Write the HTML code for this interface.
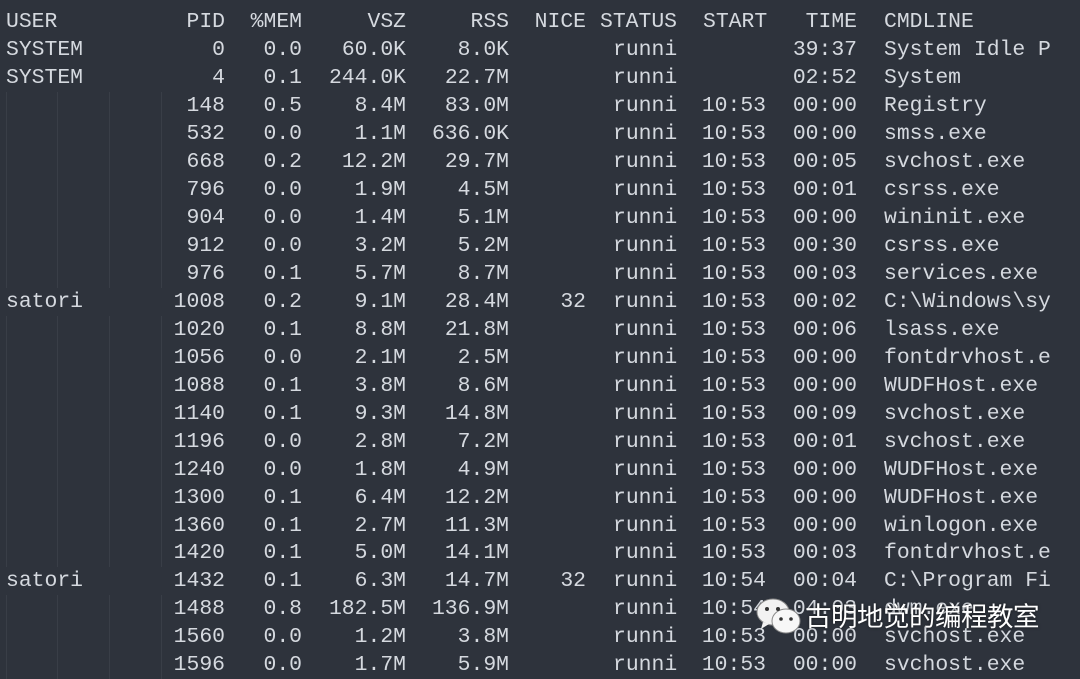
<!DOCTYPE html>
<html><head><meta charset="utf-8"><style>
html,body{margin:0;padding:0}
body{width:1080px;height:665px;overflow:hidden;background:#2e333c;position:relative;font-family:"Liberation Mono",monospace;font-size:21.4px;color:#d5d9df}
.r{position:absolute;left:0;width:1080px;height:28px;line-height:28px;white-space:pre;margin-top:1px}
.r span{position:absolute;top:0}
.u{left:6px}
.p{left:140px;width:85px;text-align:right}
.m{left:230px;width:72px;text-align:right}
.v{left:306px;width:100px;text-align:right}
.s{left:410px;width:99px;text-align:right}
.n{left:520px;width:66px;text-align:right}
.st{left:613px}
.a{left:680px;width:86px;text-align:right}
.t{left:770px;width:87px;text-align:right}
.c{left:884px}
.g{position:absolute;left:0;top:0;height:28px;width:170px;background:
linear-gradient(#393e47,#393e47) 6px 0/1px 28px no-repeat,
linear-gradient(#393e47,#393e47) 57px 0/1px 28px no-repeat,
linear-gradient(#393e47,#393e47) 109px 0/1px 28px no-repeat,
linear-gradient(#393e47,#393e47) 161px 0/1px 28px no-repeat}
.wm{position:absolute;left:805px;top:597px;font-family:"Noto Sans CJK SC",sans-serif;font-size:26.5px;color:#fff;text-shadow:0 0 3px rgba(0,0,0,.6);letter-spacing:-0.5px;line-height:36px}
</style></head><body>
<div class="r" style="top:7px"><span class="u">USER</span><span class="p">PID</span><span class="m">%MEM</span><span class="v">VSZ</span><span class="s">RSS</span><span class="n">NICE</span><span style="left:600px">STATUS</span><span style="left:703px">START</span><span class="t">TIME</span><span class="c">CMDLINE</span></div>
<div class="r" style="top:35px"><span class="u">SYSTEM</span><span class="p">0</span><span class="m">0.0</span><span class="v">60.0K</span><span class="s">8.0K</span><span class="st">runni</span><span class="t">39:37</span><span class="c">System Idle P</span></div>
<div class="r" style="top:63px"><span class="u">SYSTEM</span><span class="p">4</span><span class="m">0.1</span><span class="v">244.0K</span><span class="s">22.7M</span><span class="st">runni</span><span class="t">02:52</span><span class="c">System</span></div>
<div class="r" style="top:91px"><div class="g"></div><span class="p">148</span><span class="m">0.5</span><span class="v">8.4M</span><span class="s">83.0M</span><span class="st">runni</span><span class="a">10:53</span><span class="t">00:00</span><span class="c">Registry</span></div>
<div class="r" style="top:119px"><div class="g"></div><span class="p">532</span><span class="m">0.0</span><span class="v">1.1M</span><span class="s">636.0K</span><span class="st">runni</span><span class="a">10:53</span><span class="t">00:00</span><span class="c">smss.exe</span></div>
<div class="r" style="top:147px"><div class="g"></div><span class="p">668</span><span class="m">0.2</span><span class="v">12.2M</span><span class="s">29.7M</span><span class="st">runni</span><span class="a">10:53</span><span class="t">00:05</span><span class="c">svchost.exe</span></div>
<div class="r" style="top:175px"><div class="g"></div><span class="p">796</span><span class="m">0.0</span><span class="v">1.9M</span><span class="s">4.5M</span><span class="st">runni</span><span class="a">10:53</span><span class="t">00:01</span><span class="c">csrss.exe</span></div>
<div class="r" style="top:203px"><div class="g"></div><span class="p">904</span><span class="m">0.0</span><span class="v">1.4M</span><span class="s">5.1M</span><span class="st">runni</span><span class="a">10:53</span><span class="t">00:00</span><span class="c">wininit.exe</span></div>
<div class="r" style="top:231px"><div class="g"></div><span class="p">912</span><span class="m">0.0</span><span class="v">3.2M</span><span class="s">5.2M</span><span class="st">runni</span><span class="a">10:53</span><span class="t">00:30</span><span class="c">csrss.exe</span></div>
<div class="r" style="top:259px"><div class="g"></div><span class="p">976</span><span class="m">0.1</span><span class="v">5.7M</span><span class="s">8.7M</span><span class="st">runni</span><span class="a">10:53</span><span class="t">00:03</span><span class="c">services.exe</span></div>
<div class="r" style="top:287px"><span class="u">satori</span><span class="p">1008</span><span class="m">0.2</span><span class="v">9.1M</span><span class="s">28.4M</span><span class="n">32</span><span class="st">runni</span><span class="a">10:53</span><span class="t">00:02</span><span class="c">C:\Windows\sy</span></div>
<div class="r" style="top:315px"><div class="g"></div><span class="p">1020</span><span class="m">0.1</span><span class="v">8.8M</span><span class="s">21.8M</span><span class="st">runni</span><span class="a">10:53</span><span class="t">00:06</span><span class="c">lsass.exe</span></div>
<div class="r" style="top:343px"><div class="g"></div><span class="p">1056</span><span class="m">0.0</span><span class="v">2.1M</span><span class="s">2.5M</span><span class="st">runni</span><span class="a">10:53</span><span class="t">00:00</span><span class="c">fontdrvhost.e</span></div>
<div class="r" style="top:371px"><div class="g"></div><span class="p">1088</span><span class="m">0.1</span><span class="v">3.8M</span><span class="s">8.6M</span><span class="st">runni</span><span class="a">10:53</span><span class="t">00:00</span><span class="c">WUDFHost.exe</span></div>
<div class="r" style="top:399px"><div class="g"></div><span class="p">1140</span><span class="m">0.1</span><span class="v">9.3M</span><span class="s">14.8M</span><span class="st">runni</span><span class="a">10:53</span><span class="t">00:09</span><span class="c">svchost.exe</span></div>
<div class="r" style="top:427px"><div class="g"></div><span class="p">1196</span><span class="m">0.0</span><span class="v">2.8M</span><span class="s">7.2M</span><span class="st">runni</span><span class="a">10:53</span><span class="t">00:01</span><span class="c">svchost.exe</span></div>
<div class="r" style="top:455px"><div class="g"></div><span class="p">1240</span><span class="m">0.0</span><span class="v">1.8M</span><span class="s">4.9M</span><span class="st">runni</span><span class="a">10:53</span><span class="t">00:00</span><span class="c">WUDFHost.exe</span></div>
<div class="r" style="top:483px"><div class="g"></div><span class="p">1300</span><span class="m">0.1</span><span class="v">6.4M</span><span class="s">12.2M</span><span class="st">runni</span><span class="a">10:53</span><span class="t">00:00</span><span class="c">WUDFHost.exe</span></div>
<div class="r" style="top:511px"><div class="g"></div><span class="p">1360</span><span class="m">0.1</span><span class="v">2.7M</span><span class="s">11.3M</span><span class="st">runni</span><span class="a">10:53</span><span class="t">00:00</span><span class="c">winlogon.exe</span></div>
<div class="r" style="top:538px"><div class="g"></div><span class="p">1420</span><span class="m">0.1</span><span class="v">5.0M</span><span class="s">14.1M</span><span class="st">runni</span><span class="a">10:53</span><span class="t">00:03</span><span class="c">fontdrvhost.e</span></div>
<div class="r" style="top:566px"><span class="u">satori</span><span class="p">1432</span><span class="m">0.1</span><span class="v">6.3M</span><span class="s">14.7M</span><span class="n">32</span><span class="st">runni</span><span class="a">10:54</span><span class="t">00:04</span><span class="c">C:\Program Fi</span></div>
<div class="r" style="top:594px"><div class="g"></div><span class="p">1488</span><span class="m">0.8</span><span class="v">182.5M</span><span class="s">136.9M</span><span class="st">runni</span><span class="a">10:54</span><span class="t">04:03</span><span class="c">dwm.exe</span></div>
<div class="r" style="top:622px"><div class="g"></div><span class="p">1560</span><span class="m">0.0</span><span class="v">1.2M</span><span class="s">3.8M</span><span class="st">runni</span><span class="a">10:53</span><span class="t">00:00</span><span class="c">svchost.exe</span></div>
<div class="r" style="top:650px"><div class="g"></div><span class="p">1596</span><span class="m">0.0</span><span class="v">1.7M</span><span class="s">5.9M</span><span class="st">runni</span><span class="a">10:53</span><span class="t">00:00</span><span class="c">svchost.exe</span></div>
<svg style="position:absolute;left:755px;top:597px" width="50" height="40" viewBox="0 0 50 40">
<ellipse cx="18" cy="15" rx="16" ry="13" fill="#f2f2f2" stroke="#888" stroke-width="1"/>
<path d="M8 25 L6 32 L14 27Z" fill="#f2f2f2"/>
<ellipse cx="31" cy="24" rx="14" ry="12" fill="#f7f7f7" stroke="#888" stroke-width="1"/>
<circle cx="12" cy="12" r="2" fill="#333"/><circle cx="23" cy="12" r="2" fill="#333"/>
<circle cx="26" cy="22" r="1.8" fill="#333"/><circle cx="36" cy="22" r="1.8" fill="#333"/>
</svg>
<div class="wm">古明地觉的编程教室</div>
</body></html>
